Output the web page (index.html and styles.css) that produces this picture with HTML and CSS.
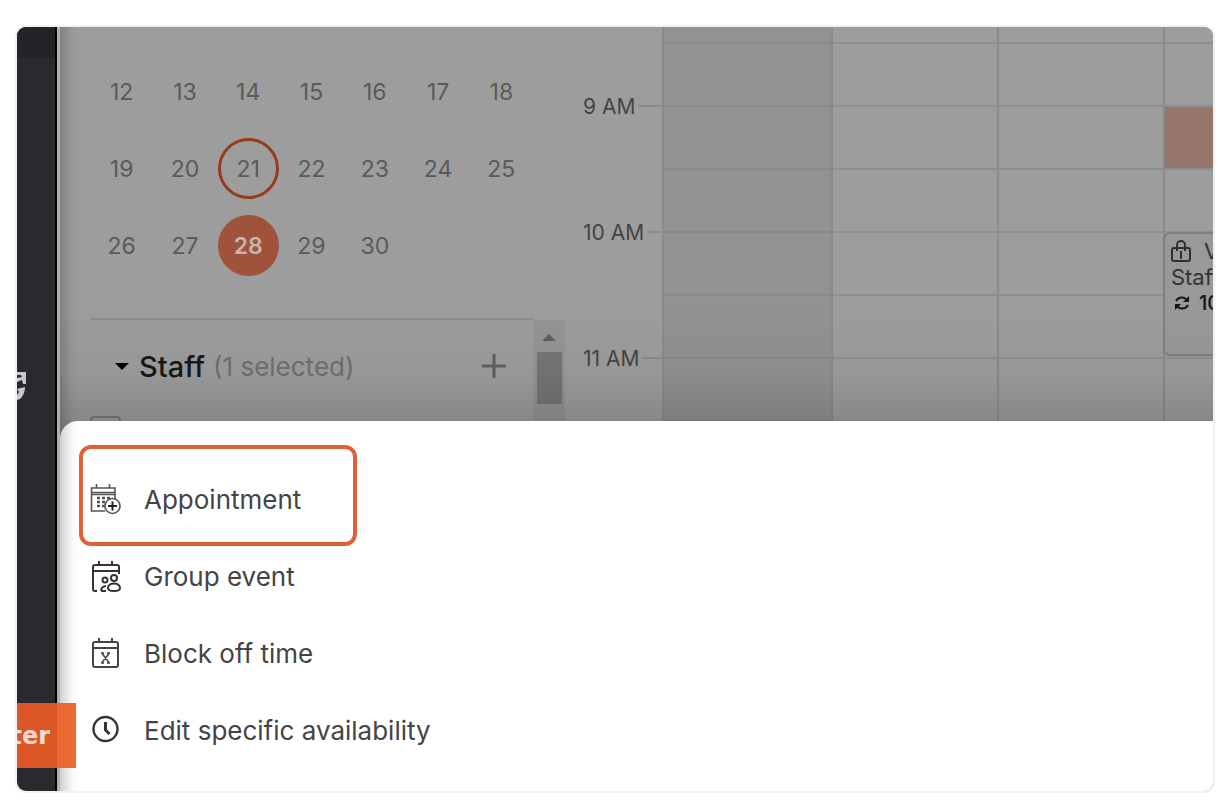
FILE: index.html
```
<!DOCTYPE html>
<html lang="en">
<head>
    <meta charset="UTF-8">
    <meta name="viewport" content="width=device-width, initial-scale=1.0">
    <title>Calendar</title>
    <link rel="stylesheet" href="styles.css">
</head>
<body>
    <div class="frame">
        <aside class="rail">
            <div class="rail-top"></div>
            <svg class="rail-icon" width="9" height="32" viewBox="0 0 9 32">
                <path d="M0 2h9v12H6l-1-4-5 2V8l5-1-1-2H0z" fill="#c9c9cd"/>
                <path d="M0 19l8-2c0 6-3 10-5 12l-3 1v-5l2-3z" fill="#c9c9cd"/>
            </svg>
        </aside>

        <main class="app">
            <section class="calendar">
                <div class="side">
                    <div class="month">
                        <span>12</span><span>13</span><span>14</span><span>15</span><span>16</span><span>17</span><span>18</span>
                        <span>19</span><span>20</span><span class="today">21</span><span>22</span><span>23</span><span>24</span><span>25</span>
                        <span>26</span><span>27</span><span class="selected">28</span><span>29</span><span>30</span>
                    </div>
                    <div class="filters">
                        <div class="staff">
                            <div class="staff-head">
                                <span class="caret"></span>
                                <h2>Staff</h2>
                                <span class="count">(1 selected)</span>
                                <button class="add" type="button" aria-label="Add staff">
                                    <svg width="24" height="24" viewBox="0 0 24 24"><path d="M12 0v24M0 12h24" stroke="#606060" stroke-width="3"/></svg>
                                </button>
                            </div>
                            <input class="check" type="checkbox" aria-label="Staff member">
                        </div>
                        <div class="scroll">
                            <span class="scroll-up"></span>
                            <span class="scroll-thumb"></span>
                        </div>
                    </div>
                </div>

                <div class="times">
                    <div class="time">9 AM</div>
                    <div class="time">10 AM</div>
                    <div class="time">11 AM</div>
                </div>

                <div class="days">
                    <div class="day past"><i></i><i></i><i></i><i></i><i></i><i></i><i></i></div>
                    <div class="day"><i></i><i></i><i></i><i></i><i></i><i></i><i></i></div>
                    <div class="day"><i></i><i></i><i></i><i></i><i></i><i></i><i></i></div>
                    <div class="day">
                        <i></i><i></i><i class="busy"></i><i></i><i></i><i></i><i></i>
                        <div class="event">
                            <div class="event-row">
                                <svg width="20" height="22" viewBox="0 0 20 22" fill="none" stroke="#303030" stroke-width="2">
                                    <rect x="1" y="8" width="18" height="13" rx="2"/>
                                    <path d="M6 8V5a4 4 0 0 1 8 0v3M6 8v3M14 8v3M10 11v8"/>
                                </svg>
                                <span>V</span>
                            </div>
                            <div class="event-row">Staff</div>
                            <div class="event-row event-time">
                                <svg width="16" height="16" viewBox="0 0 16 16" fill="none" stroke="#151515" stroke-width="2">
                                    <path d="M2 6c2-4 8-5 11-1M14 10c-2 4-8 5-11 1"/>
                                    <path d="M15 1v6H9zM1 15V9h6z" fill="#151515" stroke="none"/>
                                </svg>
                                <span>10</span>
                            </div>
                        </div>
                    </div>
                </div>
            </section>

            <nav class="sheet">
                <button class="item current" type="button">
                    <svg width="32" height="32" viewBox="0 0 32 32" fill="none" stroke="#555" stroke-width="1.6">
                        <path d="M15 27H1.500V4H25v11M1.500 8.500H25M1.500 10.500H25M6.500 0v4M19.500 0v4"/>
                        <path d="M7 14h3M12 14h3M17 14h3M7 18h3M12 18h3M7 22h3M12 22h3" stroke-width="2.600"/>
                        <circle cx="22.500" cy="22" r="7.500" fill="#fff"/>
                        <path d="M22.500 17.500v9M18 22h9" stroke="#222" stroke-width="2"/>
                    </svg>
                    Appointment
                </button>
                <button class="item" type="button">
                    <svg width="32" height="32" viewBox="0 0 32 32" fill="none" stroke="#333" stroke-width="2">
                        <path d="M7 30H5a2 2 0 0 1-2-2V6a2 2 0 0 1 2-2h22a2 2 0 0 1 2 2v7M3 10h26M9 0v4M22 0v4"/>
                        <circle cx="24" cy="17" r="3"/>
                        <path d="M18 27c0-6 12-6 12 0 0 4-12 4-12 0z"/>
                        <circle cx="15" cy="19" r="2.500"/>
                        <path d="M16 25c-4 0-6 4-4 5h4"/>
                    </svg>
                    Group event
                </button>
                <button class="item" type="button">
                    <svg width="32" height="32" viewBox="0 0 32 32" fill="none" stroke="#444" stroke-width="2">
                        <rect x="3" y="4" width="25" height="25" rx="2"/>
                        <path d="M3 10h25M9 0v4M22 0v4"/>
                        <path d="M12 15.500l7 9M19 15.500l-7 9M11 15h3M17 15h3M11 25h3M17 25h3" stroke-width="1.500"/>
                    </svg>
                    Block off time
                </button>
                <button class="item" type="button">
                    <svg width="32" height="32" viewBox="0 0 32 32" fill="none" stroke="#333" stroke-width="2.400">
                        <circle cx="15.500" cy="14" r="12"/>
                        <path d="M15.500 7V15l4 4" stroke-width="3"/>
                    </svg>
                    Edit specific availability
                </button>
            </nav>
        </main>

        <div class="ribbon"><span>ter</span></div>
    </div>
</body>
</html>
```
FILE: styles.css
```
*,
*::before,
*::after {
    box-sizing: border-box;
}

body {
    margin: 25px 17px 15px 15px;
    background: #fff;
    font-family: Inter, "Open Sans", sans-serif;
    color: #444;
}

button {
    border: none;
    background: none;
    padding: 0;
    font: inherit;
    color: inherit;
    cursor: pointer;
}

.frame {
    position: relative;
    display: flex;
    border: 2px solid #f1f1f3;
    border-radius: 11px;
    overflow: hidden;
}

/* left rail */
.rail {
    flex: none;
    width: 40px;
    background: #2a292e;
    border-right: 2px solid #000;
}

.rail-top {
    height: 31px;
    margin-bottom: 312px;
    background: #242328;
}

.rail-icon {
    display: block;
}

/* main area */
.app {
    position: relative;
    flex: 1;
    min-width: 0;
    border-left: 3px solid #b0b0b0;
    background: #858585;
}

.app::after {
    content: "";
    position: absolute;
    top: 0;
    bottom: 0;
    left: 0;
    width: 20px;
    background: linear-gradient(to right, rgba(0, 0, 0, 0.18), rgba(0, 0, 0, 0.03) 60%, transparent);
    pointer-events: none;
}

.calendar {
    position: relative;
    display: flex;
    background: #9d9d9d;
}

/* shade cast by the sheet */
.calendar::after {
    content: "";
    position: absolute;
    left: 0;
    right: 0;
    bottom: 0;
    height: 120px;
    background: linear-gradient(to bottom, transparent, rgba(0, 0, 0, 0.04) 60%, rgba(0, 0, 0, 0.14));
    pointer-events: none;
}

.side {
    flex: none;
    width: 505px;
    padding: 26px 0 0 30px;
}

.month {
    display: grid;
    grid-template-columns: repeat(7, 1fr);
    grid-auto-rows: 77px;
    place-items: center;
    margin-right: 32px;
    padding-bottom: 34px;
    border-bottom: 2px solid #8b8b8b;
    font-size: 23px;
    color: #5a5a5a;
}

.today,
.selected {
    display: flex;
    align-items: center;
    justify-content: center;
    width: 61px;
    height: 61px;
    border-radius: 50%;
}

.today {
    border: 3px solid #963b1c;
}

.selected {
    background: #a0523a;
    color: #c5b5af;
    font-weight: 600;
}

.filters {
    display: flex;
}

.staff {
    flex: 1;
    height: 102px;
    overflow: hidden;
}

.staff-head {
    display: flex;
    align-items: center;
    height: 92px;
    padding: 0 27px 0 25px;
}

.caret {
    border: 7px solid transparent;
    border-top-color: #000;
    border-bottom: none;
    margin-right: 10px;
}

.staff h2 {
    margin: 0 8px 0 0;
    font-size: 29px;
    font-weight: 500;
    color: #181818;
}

.count {
    font-size: 26px;
    color: #707070;
}

.add {
    display: flex;
    margin-left: auto;
}

.check {
    appearance: none;
    display: block;
    width: 31px;
    height: 31px;
    margin: 4px 0 0;
    border: 2px solid #777;
    border-radius: 4px;
}

.scroll {
    display: flex;
    flex-direction: column;
    align-items: center;
    width: 32px;
    background: #949494;
}

.scroll-up {
    border: 7px solid transparent;
    border-bottom-color: #606060;
    border-top: none;
    margin: 14px 0 11px;
}

.scroll-thumb {
    width: 25px;
    height: 52px;
    background: #757575;
}

/* time grid */
.times {
    flex: none;
    width: 98px;
    padding: 16px 0 0 18px;
}

.time {
    display: flex;
    align-items: center;
    gap: 3px;
    height: 126px;
    font-size: 21px;
    color: #444;
}

.time::before {
    content: none;
}

.time::after {
    content: "";
    flex: 1;
    height: 2px;
    background: #8b8b8b;
}

.days {
    flex: 1;
    min-width: 0;
    display: grid;
    grid-template-columns: 169fr 165fr 166fr 50fr;
    margin-left: -1px;
}

.day {
    position: relative;
    min-width: 0;
    border-left: 2px solid #8b8b8b;
}

.day i {
    display: block;
    height: 63px;
    border-bottom: 2px solid #8f8f8f;
}

.day i:first-child {
    height: 17px;
}

.past {
    background: #929292;
}

.past i {
    border-color: #898989;
}

.day .busy {
    background: #96766b;
}

.event {
    position: absolute;
    top: 205px;
    left: -2px;
    right: 0;
    height: 124px;
    padding: 4px 0 0 6px;
    border: 2px solid #7f7f7f;
    border-right: none;
    border-radius: 7px 0 0 7px;
    background: #999;
    overflow: hidden;
    white-space: nowrap;
    font-size: 22px;
    color: #333;
}

.event-row {
    display: flex;
    align-items: center;
    gap: 13px;
    height: 26px;
}

.event-time {
    gap: 9px;
    padding-left: 3px;
    font-size: 20px;
    font-weight: 500;
    color: #151515;
}

.event svg {
    flex: none;
}

/* bottom sheet */
.sheet {
    position: relative;
    display: flex;
    flex-direction: column;
    margin-top: -1px;
    padding: 40px 30px 22px;
    border-radius: 18px 0 0 0;
    background: #fff;
}

.item {
    position: relative;
    display: flex;
    align-items: center;
    align-self: flex-start;
    gap: 22px;
    height: 77px;
    font-size: 26px;
}

.current::before {
    content: "";
    position: absolute;
    top: -16px;
    left: -11px;
    width: 278px;
    height: 101px;
    border: 4px solid #df6135;
    border-radius: 12px;
}

/* ribbon over the rail and the sheet */
.ribbon {
    position: absolute;
    left: 0;
    bottom: 23px;
    display: flex;
    align-items: center;
    width: 59px;
    height: 65px;
    background: linear-gradient(to right, #db5826 40px, #eb6a34 40px);
}

.ribbon span {
    display: flex;
    justify-content: flex-end;
    width: 33px;
    overflow: hidden;
    font-family: "DejaVu Sans", sans-serif;
    font-size: 24px;
    font-weight: 700;
    color: #f3d9cf;
}
```
